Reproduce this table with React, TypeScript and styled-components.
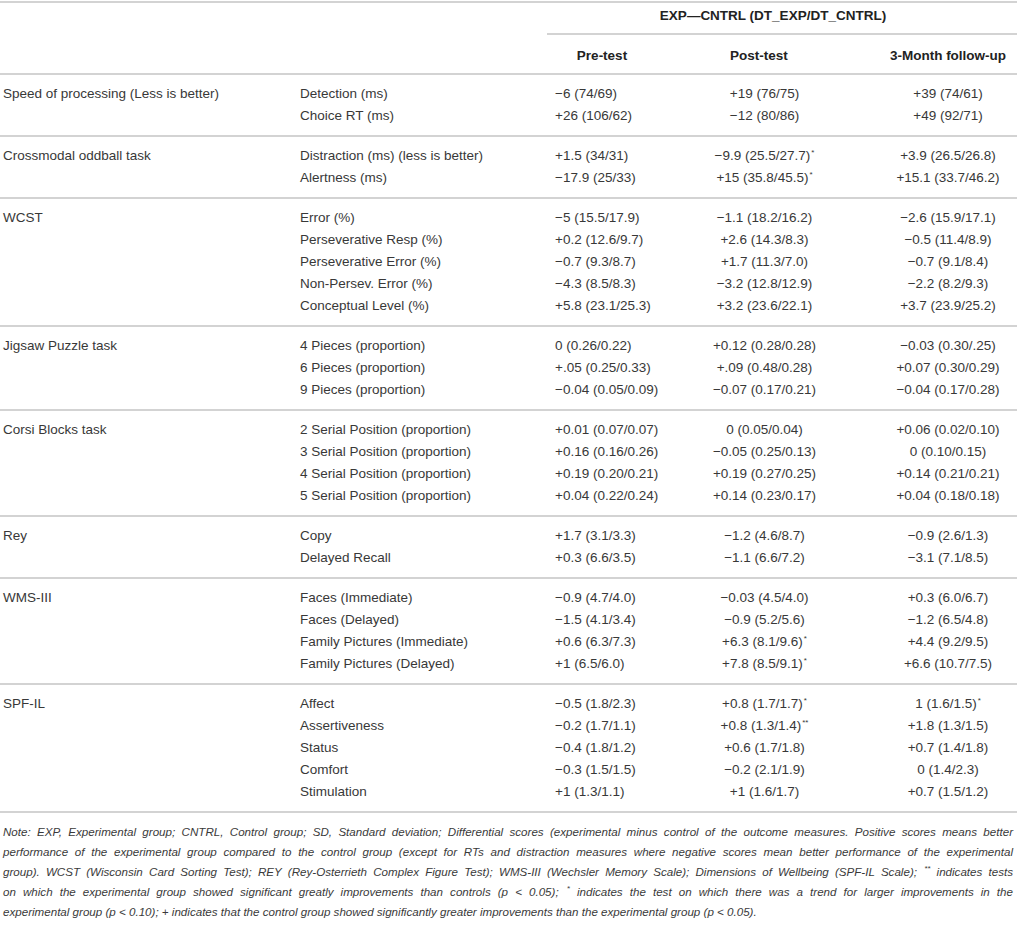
import React from "react";
import styled, { createGlobalStyle } from "styled-components";

const M = "\u2212";

type Row = { measure: string; values: [string, string, string] };
type Group = { label: string; rows: Row[] };

const groups: Group[] = [
  {
    label: "Speed of processing (Less is better)",
    rows: [
      { measure: "Detection (ms)", values: [`${M}6 (74/69)`, "+19 (76/75)", "+39 (74/61)"] },
      { measure: "Choice RT (ms)", values: ["+26 (106/62)", `${M}12 (80/86)`, "+49 (92/71)"] },
    ],
  },
  {
    label: "Crossmodal oddball task",
    rows: [
      { measure: "Distraction (ms) (less is better)", values: ["+1.5 (34/31)", `${M}9.9 (25.5/27.7)*`, "+3.9 (26.5/26.8)"] },
      { measure: "Alertness (ms)", values: [`${M}17.9 (25/33)`, "+15 (35.8/45.5)*", "+15.1 (33.7/46.2)"] },
    ],
  },
  {
    label: "WCST",
    rows: [
      { measure: "Error (%)", values: [`${M}5 (15.5/17.9)`, `${M}1.1 (18.2/16.2)`, `${M}2.6 (15.9/17.1)`] },
      { measure: "Perseverative Resp (%)", values: ["+0.2 (12.6/9.7)", "+2.6 (14.3/8.3)", `${M}0.5 (11.4/8.9)`] },
      { measure: "Perseverative Error (%)", values: [`${M}0.7 (9.3/8.7)`, "+1.7 (11.3/7.0)", `${M}0.7 (9.1/8.4)`] },
      { measure: "Non-Persev. Error (%)", values: [`${M}4.3 (8.5/8.3)`, `${M}3.2 (12.8/12.9)`, `${M}2.2 (8.2/9.3)`] },
      { measure: "Conceptual Level (%)", values: ["+5.8 (23.1/25.3)", "+3.2 (23.6/22.1)", "+3.7 (23.9/25.2)"] },
    ],
  },
  {
    label: "Jigsaw Puzzle task",
    rows: [
      { measure: "4 Pieces (proportion)", values: ["0 (0.26/0.22)", "+0.12 (0.28/0.28)", `${M}0.03 (0.30/.25)`] },
      { measure: "6 Pieces (proportion)", values: ["+.05 (0.25/0.33)", "+.09 (0.48/0.28)", "+0.07 (0.30/0.29)"] },
      { measure: "9 Pieces (proportion)", values: [`${M}0.04 (0.05/0.09)`, `${M}0.07 (0.17/0.21)`, `${M}0.04 (0.17/0.28)`] },
    ],
  },
  {
    label: "Corsi Blocks task",
    rows: [
      { measure: "2 Serial Position (proportion)", values: ["+0.01 (0.07/0.07)", "0 (0.05/0.04)", "+0.06 (0.02/0.10)"] },
      { measure: "3 Serial Position (proportion)", values: ["+0.16 (0.16/0.26)", `${M}0.05 (0.25/0.13)`, "0 (0.10/0.15)"] },
      { measure: "4 Serial Position (proportion)", values: ["+0.19 (0.20/0.21)", "+0.19 (0.27/0.25)", "+0.14 (0.21/0.21)"] },
      { measure: "5 Serial Position (proportion)", values: ["+0.04 (0.22/0.24)", "+0.14 (0.23/0.17)", "+0.04 (0.18/0.18)"] },
    ],
  },
  {
    label: "Rey",
    rows: [
      { measure: "Copy", values: ["+1.7 (3.1/3.3)", `${M}1.2 (4.6/8.7)`, `${M}0.9 (2.6/1.3)`] },
      { measure: "Delayed Recall", values: ["+0.3 (6.6/3.5)", `${M}1.1 (6.6/7.2)`, `${M}3.1 (7.1/8.5)`] },
    ],
  },
  {
    label: "WMS-III",
    rows: [
      { measure: "Faces (Immediate)", values: [`${M}0.9 (4.7/4.0)`, `${M}0.03 (4.5/4.0)`, "+0.3 (6.0/6.7)"] },
      { measure: "Faces (Delayed)", values: [`${M}1.5 (4.1/3.4)`, `${M}0.9 (5.2/5.6)`, `${M}1.2 (6.5/4.8)`] },
      { measure: "Family Pictures (Immediate)", values: ["+0.6 (6.3/7.3)", "+6.3 (8.1/9.6)*", "+4.4 (9.2/9.5)"] },
      { measure: "Family Pictures (Delayed)", values: ["+1 (6.5/6.0)", "+7.8 (8.5/9.1)*", "+6.6 (10.7/7.5)"] },
    ],
  },
  {
    label: "SPF-IL",
    rows: [
      { measure: "Affect", values: [`${M}0.5 (1.8/2.3)`, "+0.8 (1.7/1.7)*", "1 (1.6/1.5)*"] },
      { measure: "Assertiveness", values: [`${M}0.2 (1.7/1.1)`, "+0.8 (1.3/1.4)**", "+1.8 (1.3/1.5)"] },
      { measure: "Status", values: [`${M}0.4 (1.8/1.2)`, "+0.6 (1.7/1.8)", "+0.7 (1.4/1.8)"] },
      { measure: "Comfort", values: [`${M}0.3 (1.5/1.5)`, `${M}0.2 (2.1/1.9)`, "0 (1.4/2.3)"] },
      { measure: "Stimulation", values: ["+1 (1.3/1.1)", "+1 (1.6/1.7)", "+0.7 (1.5/1.2)"] },
    ],
  },
];

const noteLines = [
  "Note: EXP, Experimental group; CNTRL, Control group; SD, Standard deviation; Differential scores (experimental minus control of the outcome measures. Positive scores means better",
  "performance of the experimental group compared to the control group (except for RTs and distraction measures where negative scores mean better performance of the experimental",
  "group). WCST (Wisconsin Card Sorting Test); REY (Rey-Osterrieth Complex Figure Test); WMS-III (Wechsler Memory Scale); Dimensions of Wellbeing (SPF-IL Scale); ** indicates tests",
  "on which the experimental group showed significant greatly improvements than controls (p < 0.05); * indicates the test on which there was a trend for larger improvements in the",
  "experimental group (p < 0.10); + indicates that the control group showed significantly greater improvements than the experimental group (p < 0.05).",
];

const RULE = "2px solid #d3d3d3";

const GlobalStyle = createGlobalStyle`
  html, body {
    margin: 0;
    padding: 0;
    background: #ffffff;
  }
  body {
    font-family: "Liberation Sans", Arial, sans-serif;
    color: #383838;
  }
`;

const Page = styled.div`
  width: 1017px;
  padding-top: 1px;
`;

const Table = styled.table`
  width: 1017px;
  border-collapse: collapse;
  table-layout: fixed;
  font-size: 13.5px;
  border-top: ${RULE};
`;

const Head = styled.thead`
  tr:last-child {
    border-bottom: ${RULE};
  }
`;

const Th = styled.th<{ $ruled?: boolean; $top: number; $pl?: number; $pr?: number }>`
  font-weight: 700;
  color: #222;
  text-align: center;
  line-height: 16px;
  padding: ${({ $top, $pl, $pr }) => `${$top}px ${$pr ?? 0}px 9px ${$pl ?? 0}px`};
  border-bottom: ${({ $ruled }) => ($ruled ? RULE : "none")};
`;

const Body = styled.tbody`
  border-bottom: ${RULE};
  tr:first-child td {
    padding-top: 8px;
  }
  tr:last-child td {
    padding-bottom: 8px;
  }
`;

type Align = "left" | "center";

const Td = styled.td<{ $align?: Align; $pl?: number }>`
  height: 22px;
  line-height: 22px;
  white-space: nowrap;
  vertical-align: top;
  text-align: ${({ $align }) => $align ?? "left"};
  padding: 0 0 0 ${({ $pl }) => $pl ?? 3}px;
`;

const Star = styled.sup`
  font-size: 8px;
  line-height: 0;
  vertical-align: 5px;
  margin-left: 1px;
`;

const Note = styled.div`
  padding: 9px 4px 0 3px;
  font-size: 11.6px;
  font-style: italic;
  line-height: 20px;
  color: #3a3a3a;
`;

const NoteLine = styled.span<{ $last?: boolean }>`
  display: block;
  text-align: justify;
  text-align-last: ${({ $last }) => ($last ? "left" : "justify")};
`;

function Value({ text }: { text: string }) {
  const m = text.match(/^(.*?)(\*+)$/);
  if (!m) return <>{text}</>;
  return (
    <>
      {m[1]}
      <Star>{m[2]}</Star>
    </>
  );
}

function NoteText({ text }: { text: string }) {
  const parts = text.split(/(\*\*|\* )/);
  return (
    <>
      {parts.map((p, i) =>
        p === "**" ? (
          <Star key={i}>**</Star>
        ) : p === "* " ? (
          <React.Fragment key={i}>
            <Star>*</Star>{" "}
          </React.Fragment>
        ) : (
          <React.Fragment key={i}>{p}</React.Fragment>
        )
      )}
    </>
  );
}

export default function App() {
  return (
    <Page>
      <GlobalStyle />
      <Table>
        <colgroup>
          <col style={{ width: 297 }} />
          <col style={{ width: 250 }} />
          <col style={{ width: 110 }} />
          <col style={{ width: 212 }} />
          <col style={{ width: 148 }} />
        </colgroup>
        <Head>
          <tr>
            <Th colSpan={2} $top={5} />
            <Th colSpan={3} $top={5} $pr={18} $ruled>
              EXP{"\u2014"}CNTRL (DT_EXP/DT_CNTRL)
            </Th>
          </tr>
          <tr>
            <Th colSpan={2} $top={13} />
            <Th $top={13}>Pre-test</Th>
            <Th $top={13} $pr={8}>
              Post-test
            </Th>
            <Th $top={13} $pl={10}>
              3-Month follow-up
            </Th>
          </tr>
        </Head>
        {groups.map((g) => (
          <Body key={g.label}>
            {g.rows.map((r, i) => (
              <tr key={r.measure}>
                <Td>{i === 0 ? g.label : ""}</Td>
                <Td>{r.measure}</Td>
                <Td $pl={8}>
                  <Value text={r.values[0]} />
                </Td>
                <Td $align="center">
                  <Value text={r.values[1]} />
                </Td>
                <Td $align="center" $pl={10}>
                  <Value text={r.values[2]} />
                </Td>
              </tr>
            ))}
          </Body>
        ))}
      </Table>
      <Note>
        {noteLines.map((l, i) => (
          <NoteLine key={i} $last={i === noteLines.length - 1}>
            <NoteText text={l} />
          </NoteLine>
        ))}
      </Note>
    </Page>
  );
}
